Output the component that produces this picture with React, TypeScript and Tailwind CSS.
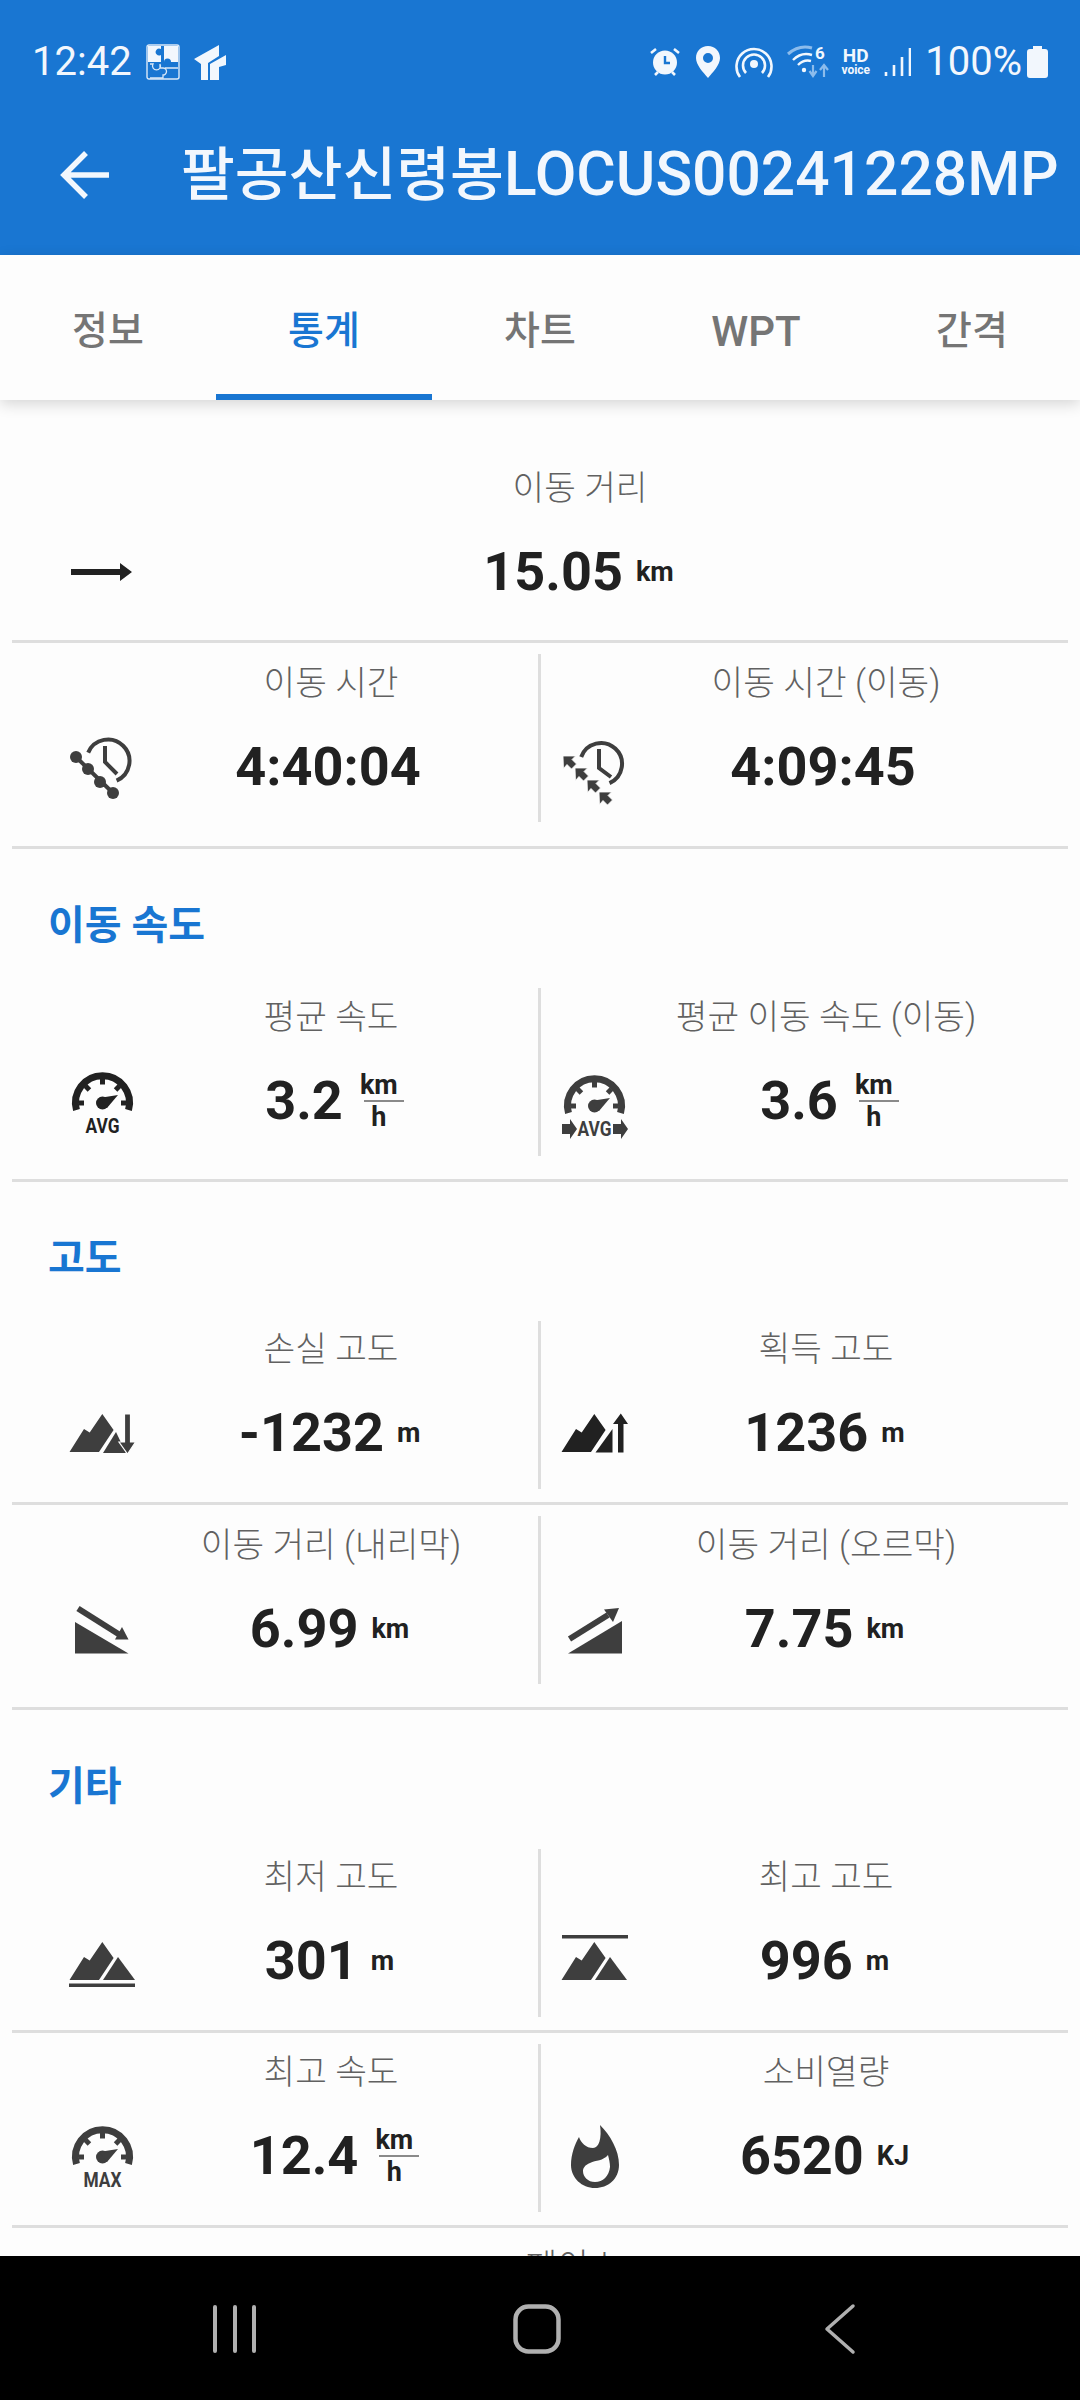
import type { ReactNode } from "react";

const DARK = "#212121";
const GREY = "#3e3e3e";

/* ---------- ICONS ---------- */
function Box({ children }: { children: ReactNode }) {
  return (
    <svg width="72" height="72" viewBox="0 0 72 72" className="overflow-visible">
      {children}
    </svg>
  );
}

function ArrowRight() {
  return (
    <Box>
      <path d="M5 33h49v-6l12 9-12 9v-6H5z" fill={DARK} />
    </Box>
  );
}

function ClockChain() {
  return (
    <Box>
      <path d="M22.200 21.600A21.500 21.500 0 1 1 50.600 49.700" fill="none" stroke={GREY} strokeWidth="4" />
      <path d="M39 15V31L51 43" fill="none" stroke={GREY} strokeWidth="4" />
      <path d="M10 26L47 62" stroke={GREY} strokeWidth="4" />
      <circle cx="10" cy="26" r="6" fill={GREY} />
      <circle cx="22" cy="38" r="6" fill={GREY} />
      <circle cx="34" cy="51" r="6" fill={GREY} />
      <circle cx="47" cy="62" r="6" fill={GREY} />
    </Box>
  );
}

function ClockMoving() {
  const tips = [
    [5, 25],
    [17, 37],
    [29, 49],
    [41, 61],
  ];
  return (
    <Box>
      <path d="M23.200 26A21 21 0 1 1 51.500 52.200" fill="none" stroke={GREY} strokeWidth="4" />
      <path d="M41 18V37L53 46" fill="none" stroke={GREY} strokeWidth="4" />
      {tips.map(([x, y]) => (
        <path
          key={x}
          transform={`translate(${x} ${y})`}
          d="M0 0H12.500L9 3.500L13.500 8L8.500 13L4 8.500L0.500 12.500Z"
          fill={GREY}
          stroke="#fdfdfd"
          strokeWidth="0.8"
        />
      ))}
    </Box>
  );
}

function Gauge({ text, color, top, arrows }: { text: string; color: string; top: number; arrows?: boolean }) {
  const ticks = [180, 225, 270, 315, 360];
  return (
    <Box>
      <g transform={`translate(0 ${top})`}>
        <path d="M10.500 37A27 27 0 1 1 62.500 37" fill="none" stroke={color} strokeWidth="7" />
        {ticks.map(a => {
          const r = (a * Math.PI) / 180;
          return (
            <line
              key={a}
              x1={36.5 + 24 * Math.cos(r)}
              y1={30 + 24 * Math.sin(r)}
              x2={36.5 + 18.5 * Math.cos(r)}
              y2={30 + 18.5 * Math.sin(r)}
              stroke={color}
              strokeWidth="5"
            />
          );
        })}
        <circle cx="36.500" cy="30" r="6.500" fill={color} />
        <path d="M33 25L52 22L41 35z" fill={color} />
      </g>
      <text
        x="36.500"
        y={top + 60}
        textAnchor="middle"
        fontFamily="Roboto"
        fontWeight="700"
        fontSize="21"
        textLength={text === "MAX" ? 38 : 34}
        lengthAdjust="spacingAndGlyphs"
        fill={color}
      >
        {text}
      </text>
      {arrows && (
        <g fill={color}>
          <path d="M4 59h8v-5l7 10-7 10v-5H4z" />
          <path d="M55 59h8v-5l7 10-7 10v-5h-8z" />
        </g>
      )}
    </Box>
  );
}

const BIG_PEAK = "M3.500 55L18 32L23.700 35.500L36.300 17L47.600 33L33 55z";

function MountainLoss() {
  return (
    <Box>
      <path d={BIG_PEAK} fill={GREY} />
      <path d="M37 56L50 35L60 56z" fill={GREY} />
      <path d="M58.500 17h6v28h5L61.500 57 53 45h5.500z" fill={GREY} stroke="#fdfdfd" strokeWidth="1.200" />
    </Box>
  );
}

function MountainGain() {
  return (
    <Box>
      <path d={BIG_PEAK} fill={DARK} />
      <path d="M37.500 55.500L54.500 32V55.500z" fill={DARK} />
      <path d="M60 55.500V27h-5L62.800 16.500 70 27h-4.500V55.500z" fill={DARK} />
    </Box>
  );
}

function Downhill() {
  return (
    <Box>
      <path d="M9 29V60.500H62.500z" fill={GREY} />
      <path d="M12 15.500L54 42" fill="none" stroke={GREY} strokeWidth="6" />
      <path d="M56 34L49 46.500H62.500z" fill={GREY} />
    </Box>
  );
}

function Uphill() {
  return (
    <Box>
      <path d="M64 28V60.500H10z" fill={GREY} />
      <path d="M11.500 46L50 22" fill="none" stroke={GREY} strokeWidth="6" />
      <path d="M46 16.500L61 15L55 29z" fill={GREY} />
    </Box>
  );
}

function MountainLow() {
  return (
    <Box>
      <path d={BIG_PEAK} fill={GREY} />
      <path d="M37 55L52 32L69 55z" fill={GREY} />
      <rect x="3" y="58.500" width="66" height="3.500" fill={GREY} />
    </Box>
  );
}

function MountainHigh() {
  return (
    <Box>
      <rect x="4" y="10" width="66" height="3.500" fill={GREY} />
      <path d={BIG_PEAK} fill={GREY} />
      <path d="M37 55L52 32L69 55z" fill={GREY} />
    </Box>
  );
}

function Flame() {
  return (
    <Box>
      <path
        fillRule="evenodd"
        fill={GREY}
        d="M42 5C52 15 61 30 61 45C61 59 50 68 37 68C24 68 13 58 13 45C13 34 17 24 21 17C23 23 28 28 35 28C41 28 44 18 42 5ZM50 35C45 41 38 40 32 43C27 45 25 48 25 51C25 57 30 62 37 62C45 62 51 56 52 47C52 43 51 39 50 35Z"
      />
    </Box>
  );
}

/* ---------- STATUS BAR ICONS ---------- */
function StatusLeftIcons() {
  return (
    <div className="ml-[14px] flex items-center gap-[14px]">
      <svg width="34" height="36" viewBox="0 0 34 36">
        <rect x="1" y="1" width="32" height="34" rx="2" fill="none" stroke="#dbe9f8" strokeWidth="1.400" />
        <path d="M2 2h13v3a3.500 3.500 0 1 0 0 6v7H2zM18 2h14v16h-7a3.500 3.500 0 1 0-7 0z" fill="#f2f7fd" />
        <path d="M4 20h3a4 4 0 1 0 7 0v4h3a3.500 3.500 0 1 1 0 7v3H4M19 24h13" fill="none" stroke="#dbe9f8" strokeWidth="1.300" />
      </svg>
      <svg width="32" height="35" viewBox="0 0 32 35">
        <path d="M0 14L25 0V11L14 18V35H7V19z" fill="#f2f7fd" />
        <path d="M16 35V19L32 10V20L25 22V35z" fill="#f2f7fd" />
      </svg>
    </div>
  );
}

function StatusRightIcons() {
  return (
    <div className="flex items-center">
      {/* alarm */}
      <svg width="30" height="30" viewBox="0 0 30 30" className="mr-[16px]">
        <circle cx="15" cy="15.500" r="12" fill="#f2f7fd" />
        <path d="M15 9v7h5" fill="none" stroke="#1976d2" strokeWidth="2.400" />
        <path d="M1 6L6 2M29 6L24 2M5 28l3-3M25 28l-3-3" stroke="#f2f7fd" strokeWidth="2.600" />
      </svg>
      {/* pin */}
      <svg width="24" height="32" viewBox="0 0 24 32" className="mr-[15px]">
        <path fillRule="evenodd" fill="#f2f7fd" d="M12 0C5 0 0 5 0 12C0 19 7 26 12 32C17 26 24 19 24 12C24 5 19 0 12 0ZM12 7a5 5 0 1 1 0 10a5 5 0 1 1 0-10Z" />
      </svg>
      {/* hotspot */}
      <svg width="38" height="32" viewBox="0 0 38 32" className="mr-[14px]">
        <circle cx="19" cy="18" r="4" fill="#f2f7fd" />
        <path d="M11 27A11 11 0 1 1 27 27" fill="none" stroke="#f2f7fd" strokeWidth="2.600" />
        <path d="M5 31A17.500 17.500 0 1 1 33 31" fill="none" stroke="#f2f7fd" strokeWidth="2.600" />
      </svg>
      {/* wifi 6 */}
      <svg width="44" height="34" viewBox="0 0 44 34" className="mr-[8px]">
        <path d="M1 9C9 2 18 1 25 3" fill="none" stroke="#8cbcec" strokeWidth="3" />
        <path d="M6 15C12 9 19 8 25 10M11 20C15 16 20 15 24 16" fill="none" stroke="#f2f7fd" strokeWidth="2.400" />
        <circle cx="17" cy="25" r="2.200" fill="#f2f7fd" />
        <text x="28" y="14" fontFamily="Roboto" fontWeight="700" fontSize="17" fill="#f2f7fd">6</text>
        <path d="M26 20v10M22.500 26l3.500 5 3.500-5M37 32V21M33 25l4-5 4 5" fill="none" stroke="#8cbcec" strokeWidth="2.200" />
      </svg>
      {/* hd voice */}
      <div className="mr-[12px] flex w-[33px] flex-col items-center text-[#f2f7fd]">
        <span className="h-[16px] text-[19px] leading-[16px] font-bold">HD</span>
        <span className="h-[12px] text-[12px] leading-[12px] font-bold">voice</span>
      </div>
      {/* signal */}
      <svg width="27" height="30" viewBox="0 0 27 30" className="mr-[14px]">
        <path d="M2 25v4M10 18v11M18 10v19M26 1v28" stroke="#f2f7fd" strokeWidth="2.600" fill="none" />
      </svg>
      <span className="mr-[5px] text-[40px] leading-none text-[#f2f7fd]">100%</span>
      {/* battery */}
      <svg width="21" height="32" viewBox="0 0 21 32">
        <path d="M6 0h9v3h3a3 3 0 0 1 3 3v23a3 3 0 0 1-3 3H3a3 3 0 0 1-3-3V6a3 3 0 0 1 3-3h3z" fill="#f2f7fd" />
      </svg>
    </div>
  );
}

/* ---------- STATS ---------- */
function Unit({ children }: { children: string }) {
  return <span className="text-[27px] font-bold text-[#212121]">{children}</span>;
}

function Rate() {
  return (
    <div className="ml-[8px] flex w-[30px] flex-col items-center text-[27px] leading-[26px] font-bold text-[#212121]">
      <span>km</span>
      <span className="my-[2px] h-[2px] w-[40px] self-start bg-[#8a8a8a]" />
      <span>h</span>
    </div>
  );
}

function Cell({
  side,
  tall,
  icon,
  label,
  value,
  unit,
}: {
  side: "left" | "right" | "full";
  tall?: boolean;
  icon: ReactNode;
  label: string;
  value: string;
  unit: ReactNode;
}) {
  const pad = side === "left" ? "pl-[54px] pr-[14px]" : side === "right" ? "pl-[17px] pr-[46px]" : "pl-[54px] pr-[46px]";
  return (
    <div className={`grid grid-cols-[72px_1fr] grid-rows-[48px_72px] gap-y-[24px] ${pad} ${tall ? "pt-[16px]" : "pt-[15px]"}`}>
      <div className="col-start-2 flex items-center justify-center text-[34.4px] leading-none font-light text-[#616161]">{label}</div>
      <div className="col-start-1 row-start-2">{icon}</div>
      <div className={`col-start-2 row-start-2 flex items-center justify-center gap-[13px] ${unit ? "pr-[3px]" : "pr-[6px]"}`}>
        <span className="text-[54px] leading-none font-bold text-[#212121]">{value}</span>
        {unit}
      </div>
    </div>
  );
}

function Pair({ size, children }: { size: "sm" | "md" | "lg"; children: ReactNode }) {
  const h = size === "lg" ? "h-[203px]" : size === "md" ? "h-[202px]" : "h-[192px]";
  return <div className={`grid grid-cols-[526px_3px_1fr] ${h}`}>{children}</div>;
}

function VLine() {
  return <div className="mt-[11px] h-[168px] bg-[#dedede]" />;
}

function Line() {
  return <div className="h-[3px] bg-[#dedede]" />;
}

function Section({ children }: { children: string }) {
  return (
    <div className="flex h-[128px] items-start pt-[51px] pl-[36px] text-[40px] leading-[52px] font-bold text-[#1976d2]">
      {children}
    </div>
  );
}

const TABS = ["정보", "통계", "차트", "WPT", "간격"];

export default function App() {
  return (
    <div className="flex h-[2400px] w-[1080px] flex-col overflow-hidden bg-[#fdfdfd] font-['Roboto','Noto_Sans_CJK_KR',sans-serif]">
      {/* Header */}
      <header className="h-[255px] shrink-0 bg-[#1976d2]">
        <div className="flex h-[124px] items-center justify-between pr-[32px] pl-[32px]">
          <div className="flex items-center">
            <span className="text-[40px] leading-none text-[#f2f7fd]">12:42</span>
            <StatusLeftIcons />
          </div>
          <StatusRightIcons />
        </div>
        <div className="flex h-[102px] items-center pl-[60px]">
          <svg width="50" height="50" viewBox="0 0 50 50" className="mr-[71px] shrink-0">
            <path d="M49 25H4M26 3L4 25L26 47" fill="none" stroke="#f2f7fd" strokeWidth="5.500" />
          </svg>
          <h1 className="leading-none font-medium whitespace-nowrap text-[#f2f7fd]">
            <span className="text-[58.5px]">팔공산신령봉</span>
            <span className="text-[60.500px]">LOCUS00241228MP</span>
          </h1>
        </div>
      </header>

      {/* Tabs */}
      <nav className="z-10 grid h-[145px] shrink-0 grid-cols-5 bg-[#fdfdfd] shadow-[0_4px_14px_rgba(0,0,0,0.16)]">
        {TABS.map((t, i) => (
          <div
            key={t}
            className={`flex items-center justify-center border-b-[6px] pt-[13px] font-medium ${t === "WPT" ? "text-[42px]" : "text-[39px]"} ${
              i === 1 ? "border-[#1976d2] text-[#1976d2]" : "border-transparent text-[#757575]"
            }`}
          >
            {t}
          </div>
        ))}
      </nav>

      {/* Stats */}
      <main className="flex-1 overflow-hidden px-[12px] pt-[49px]">
        <div className="h-[191px]">
          <Cell side="full" icon={<ArrowRight />} label="이동 거리" value="15.05" unit={<Unit>km</Unit>} />
        </div>
        <Line />
        <Pair size="lg">
          <Cell side="left" tall icon={<ClockChain />} label="이동 시간" value="4:40:04" unit={null} />
          <VLine />
          <Cell side="right" tall icon={<ClockMoving />} label="이동 시간 (이동)" value="4:09:45" unit={null} />
        </Pair>
        <Line />

        <Section>이동 속도</Section>
        <Pair size="md">
          <Cell side="left" tall icon={<Gauge text="AVG" color={DARK} top={8} />} label="평균 속도" value="3.2" unit={<Rate />} />
          <VLine />
          <Cell side="right" tall icon={<Gauge text="AVG" color={GREY} top={11} arrows />} label="평균 이동 속도 (이동)" value="3.6" unit={<Rate />} />
        </Pair>
        <Line />

        <Section>고도</Section>
        <Pair size="sm">
          <Cell side="left" icon={<MountainLoss />} label="손실 고도" value="-1232" unit={<Unit>m</Unit>} />
          <VLine />
          <Cell side="right" icon={<MountainGain />} label="획득 고도" value="1236" unit={<Unit>m</Unit>} />
        </Pair>
        <Line />
        <Pair size="md">
          <Cell side="left" tall icon={<Downhill />} label="이동 거리 (내리막)" value="6.99" unit={<Unit>km</Unit>} />
          <VLine />
          <Cell side="right" tall icon={<Uphill />} label="이동 거리 (오르막)" value="7.75" unit={<Unit>km</Unit>} />
        </Pair>
        <Line />

        <Section>기타</Section>
        <Pair size="sm">
          <Cell side="left" icon={<MountainLow />} label="최저 고도" value="301" unit={<Unit>m</Unit>} />
          <VLine />
          <Cell side="right" icon={<MountainHigh />} label="최고 고도" value="996" unit={<Unit>m</Unit>} />
        </Pair>
        <Line />
        <Pair size="sm">
          <Cell side="left" icon={<Gauge text="MAX" color={GREY} top={7} />} label="최고 속도" value="12.4" unit={<Rate />} />
          <VLine />
          <Cell side="right" icon={<Flame />} label="소비열량" value="6520" unit={<Unit>KJ</Unit>} />
        </Pair>
        <Line />
        <div className="pt-[14px]">
          <div className="flex h-[48px] items-center justify-center pr-[60px] pl-[126px] text-[34.4px] leading-none font-light text-[#616161]">페이스</div>
        </div>
      </main>

      {/* Android nav bar */}
      <footer className="relative z-10 flex h-[144px] shrink-0 items-center bg-black">
        <svg width="1080" height="144" viewBox="0 0 1080 144" fill="none" stroke="#b0b0b0">
          <path d="M215 51V95M235 51V95M254 51V95" strokeWidth="4" strokeLinecap="round" />
          <rect x="515.500" y="50.500" width="43" height="45" rx="13" strokeWidth="4.500" />
          <path d="M853 50L827 73L853 96" strokeWidth="3.500" strokeLinecap="round" strokeLinejoin="round" />
        </svg>
      </footer>
    </div>
  );
}
